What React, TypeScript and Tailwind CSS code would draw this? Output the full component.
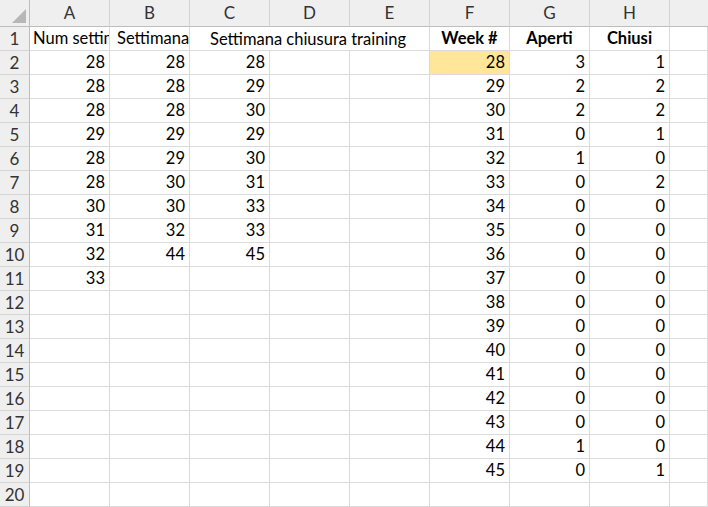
import React from "react";

const colLetters = ["A", "B", "C", "D", "E", "F", "G", "H", ""];
const A = [28, 28, 28, 29, 28, 28, 30, 31, 32, 33];
const B = [28, 28, 28, 29, 29, 30, 30, 32, 44];
const C = [28, 29, 30, 29, 30, 31, 33, 33, 45];
const G = [3, 2, 2, 0, 1, 0, 0, 0, 0, 0, 0, 0, 0, 0, 0, 0, 1, 0];
const H = [1, 2, 2, 1, 0, 2, 0, 0, 0, 0, 0, 0, 0, 0, 0, 0, 0, 1];

type CellVal = { text?: string; align?: "right" | "center" | "left"; bold?: boolean; fill?: boolean; overflow?: boolean; clip?: boolean; pad?: string };

function cellFor(row: number, col: number): CellVal {
  if (row === 1) {
    if (col === 0) return { text: "Num settimana apertura", align: "left", clip: true, pad: "pl-[3px]" };
    if (col === 1) return { text: "Settimana", align: "left", clip: true, pad: "pl-[7px]" };
    if (col === 2) return { text: "Settimana chiusura training", align: "left", overflow: true };
    if (col === 5) return { text: "Week #", align: "center", bold: true };
    if (col === 6) return { text: "Aperti", align: "center", bold: true };
    if (col === 7) return { text: "Chiusi", align: "center", bold: true };
    return {};
  }
  const i = row - 2;
  if (col === 0 && i < A.length) return { text: String(A[i]), align: "right" };
  if (col === 1 && i < B.length) return { text: String(B[i]), align: "right" };
  if (col === 2 && i < C.length) return { text: String(C[i]), align: "right" };
  if (col === 5 && i < 18) return { text: String(28 + i), align: "right", fill: row === 2 };
  if (col === 6 && i < 18) return { text: String(G[i]), align: "right" };
  if (col === 7 && i < 18) return { text: String(H[i]), align: "right" };
  return {};
}

export default function App() {
  const rows = Array.from({ length: 20 }, (_, i) => i + 1);
  return (
    <div
      className="w-[708px] h-[507px] overflow-hidden bg-white text-black"
      style={{ fontFamily: "Lato, 'Open Sans', sans-serif" }}
    >
      <div className="grid grid-cols-[30px_repeat(8,80px)_38px] grid-rows-[27px_repeat(20,24px)]">
        {/* corner */}
        <div className="relative bg-[#efefef] border-r border-b border-[#bdbdbd]">
          <svg className="absolute left-[12px] top-[9px]" width="14" height="14" viewBox="0 0 14 14">
            <polygon points="14,0 14,14 0,14" fill="#b7b7b7" />
          </svg>
        </div>
        {colLetters.map((l, i) => (
          <div
            key={"h" + i}
            className={`bg-[#efefef] border-b border-[#bdbdbd] flex items-center justify-center text-[17px] text-[#333] ${i < 8 ? "border-r border-r-[#d4d4d4]" : ""}`}
          >
            {l}
          </div>
        ))}
        {rows.map((r) => (
          <React.Fragment key={r}>
            <div className="bg-[#efefef] border-r border-b border-r-[#bdbdbd] border-b-[#d4d4d4] flex items-center justify-center text-[17px] text-[#333]">
              {r}
            </div>
            {Array.from({ length: 9 }, (_, c) => {
              const v = cellFor(r, c);
              const hideRight = r === 1 && (c === 2 || c === 3);
              return (
                <div
                  key={c}
                  className={`relative border-b border-[#dadada] ${hideRight ? "" : "border-r"} ${v.fill ? "bg-[#ffe699]" : ""} ${v.clip ? "overflow-hidden" : ""} flex items-center text-[16.5px] leading-none whitespace-nowrap ${
                    v.align === "right" ? "justify-end pr-[4px]" : v.align === "center" ? "justify-center" : "justify-start"
                  } ${v.bold ? "font-bold" : ""} ${v.pad ?? ""}`}
                >
                  {v.overflow ? (
                    <span className="absolute left-[20px] top-1/2 -translate-y-1/2 z-10">{v.text}</span>
                  ) : (
                    v.text
                  )}
                </div>
              );
            })}
          </React.Fragment>
        ))}
      </div>
    </div>
  );
}
